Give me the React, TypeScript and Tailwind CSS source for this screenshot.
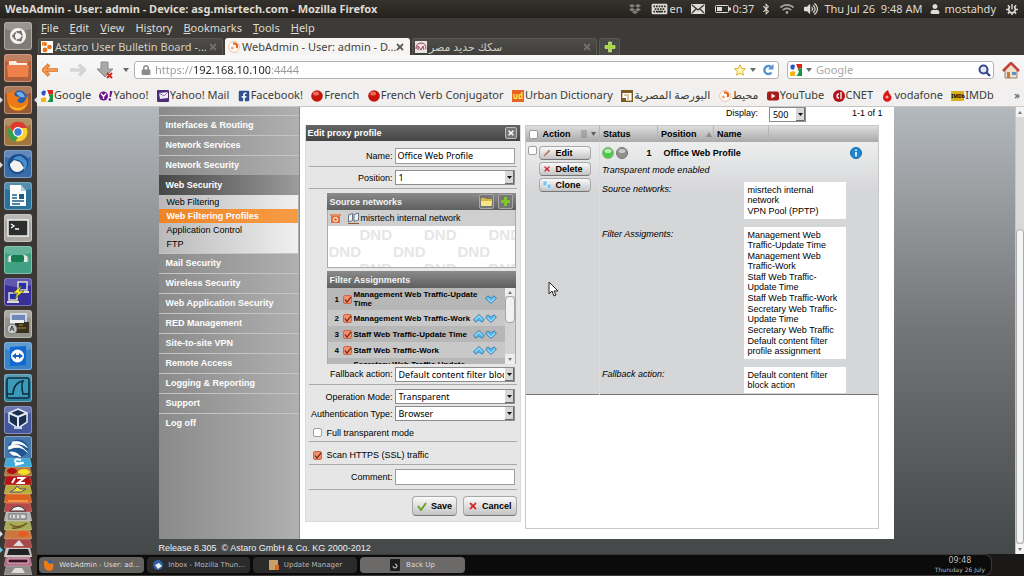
import { useState } from "react";
import type { ReactNode } from "react";
import {
  FaBluetoothB,
  FaDropbox,
  FaFacebookSquare,
  FaKeyboard,
  FaLock,
  FaTimes,
  FaUser,
  FaVolumeUp,
  FaWifi,
} from "react-icons/fa";

const UI_FONT = "font-['Noto_Sans','DejaVu_Sans',sans-serif]";
const PAGE_FONT = "font-['Liberation_Sans',Arial,sans-serif]";

const MENUS = [
  ["", "F", "ile"],
  ["", "E", "dit"],
  ["", "V", "iew"],
  ["Hi", "s", "tory"],
  ["", "B", "ookmarks"],
  ["", "T", "ools"],
  ["", "H", "elp"],
];

const NAV_TOP = ["Interfaces & Routing", "Network Services", "Network Security"];
const NAV_SUB = [
  "Web Filtering",
  "Web Filtering Profiles",
  "Application Control",
  "FTP",
];
const NAV_BOTTOM = [
  "Mail Security",
  "Wireless Security",
  "Web Application Security",
  "RED Management",
  "Site-to-site VPN",
  "Remote Access",
  "Logging & Reporting",
  "Support",
  "Log off",
];

const ASSIGNMENTS = [
  { name: "Management Web Traffic-Update Time", up: false },
  { name: "Management Web Traffic-Work", up: true },
  { name: "Staff Web Traffic-Update Time", up: true },
  { name: "Staff Web Traffic-Work", up: true },
  { name: "Secretary Web Traffic-Update Time", up: true },
];

const DETAILS = [
  {
    label: "Source networks:",
    values: ["misrtech internal network", "VPN Pool (PPTP)"],
  },
  {
    label: "Filter Assigments:",
    values: [
      "Management Web Traffic-Update Time",
      "Management Web Traffic-Work",
      "Staff Web Traffic-Update Time",
      "Staff Web Traffic-Work",
      "Secretary Web Traffic-Update Time",
      "Secretary Web Traffic",
      "Default content filter profile assignment",
    ],
  },
  { label: "Fallback action:", values: ["Default content filter block action"] },
];

/* ---------- small icons ---------- */

function GoogleIcon() {
  return (
    <svg viewBox="0 0 12 12" className="size-3 shrink-0">
      <rect width="12" height="12" fill="#fff" />
      <path d="M6 0h6v4L8 5z" fill="#d8261c" />
      <path d="M8 5l4-1v8H6l1-4z" fill="#159545" />
      <circle cx="3" cy="3" r="2.600" fill="#2b55c4" />
      <path d="M0 8l4-1 2 2-1 3H0z" fill="#f3b518" />
      <path d="M5 1l2 1-1 3 3 2-1 3-2 2-1-2 1-2-2-2z" fill="#fff" />
    </svg>
  );
}

function AstaroIcon() {
  return (
    <svg viewBox="0 0 12 12" className="size-3 shrink-0">
      <rect width="12" height="12" fill="#fff" />
      <circle cx="4" cy="3" r="2" fill="#e8731b" />
      <circle cx="8.500" cy="6" r="2.300" fill="#e8731b" />
      <circle cx="4" cy="9" r="2.400" fill="#e8731b" />
      <path d="M1 0l3 3-3 2z" fill="#f08b32" />
    </svg>
  );
}

function SwirlIcon() {
  return (
    <svg viewBox="0 0 12 12" className="size-3 shrink-0">
      <circle cx="6" cy="6" r="5.400" fill="#fff" stroke="#eeb48d" strokeWidth=".8" />
      <path d="M5 1.500c4-.5 6 2 5 5-1 1.500-2.500 1-2-.5.500-2-1-3-3-2z" fill="#e2641b" />
      <circle cx="4.300" cy="7" r="1.600" fill="#edab7d" />
    </svg>
  );
}

function YahooIcon() {
  return (
    <svg viewBox="0 0 14 12" className="h-3 w-3.5 shrink-0">
      <circle cx="4.500" cy="6" r="4.500" fill="#6b1387" />
      <path d="M2 3.500l2.500 3 2.500-3M4.500 6.500V9" fill="none" stroke="#fff" strokeWidth="1.400" />
      <path d="M11 1h2.500L12 7h-1.500z" fill="#6b1387" />
      <circle cx="10.800" cy="9.500" r="1.200" fill="#6b1387" />
    </svg>
  );
}

function RedBall() {
  return (
    <svg viewBox="0 0 12 12" className="size-3 shrink-0">
      <circle cx="6" cy="6" r="5.800" fill="#c3150c" />
      <ellipse cx="5" cy="3.600" rx="3" ry="2" fill="#ef6a5c" />
    </svg>
  );
}

function MailFavicon() {
  return (
    <svg viewBox="0 0 12 12" className="size-3 shrink-0">
      <rect width="12" height="12" rx="1" fill="#4c2c78" />
      <path d="M2 3l9-1v6l-8 1z" fill="#f1edf7" />
      <path d="M2 3l5 3 4-4" fill="none" stroke="#8d77ad" />
    </svg>
  );
}

function BourseIcon() {
  return (
    <svg viewBox="0 0 12 12" className="size-3 shrink-0">
      <rect x=".7" y=".7" width="10.600" height="10.600" fill="#fff" stroke="#7b5b20" strokeWidth="1.400" />
      <path d="M1 8h4v3H1zM1 1h10v2H1z" fill="#7b5b20" />
      <path d="M3 4h5v6H6V6H3z" fill="#d8c9a4" />
    </svg>
  );
}

function YouTubeIcon() {
  return (
    <svg viewBox="0 0 12 12" className="size-3 shrink-0">
      <rect y="1.500" width="12" height="9" rx="2" fill="#a41b17" />
      <path d="M4.500 3.500v5L8.500 6z" fill="#fff" />
    </svg>
  );
}

function CnetIcon() {
  return (
    <svg viewBox="0 0 12 12" className="size-3 shrink-0">
      <circle cx="6" cy="6" r="6" fill="#b3121d" />
      <path d="M6 4a2 2 0 1 0 0 4M8 2v7" fill="none" stroke="#fff" strokeWidth="1.300" />
    </svg>
  );
}

function VodafoneIcon() {
  return (
    <svg viewBox="0 0 12 12" className="size-3 shrink-0">
      <path d="M7 0C4 2 2 4 2 7.500a4 4 0 0 0 8.500 0C10 5 8 4 7 0z" fill="#dc1414" />
      <circle cx="6" cy="7" r="1.600" fill="#f5a8a2" />
    </svg>
  );
}

function Chevron({ up }: { up?: boolean }) {
  return (
    <svg viewBox="0 0 12 9" className={up ? "h-[9px] w-3" : "h-[9px] w-3 rotate-180"}>
      <path
        d="M6 .6l5.400 5-2.200 2.600L6 5.800 2.800 8.200.6 5.600z"
        fill="#5dbcec"
        stroke="#2577ad"
        strokeWidth=".8"
      />
      <path d="M2 5.500L6 2l3.500 3.200" fill="none" stroke="#c4ebfb" strokeWidth=".9" />
    </svg>
  );
}

function Caret() {
  return (
    <svg viewBox="0 0 6 4" className="h-1 w-1.5 shrink-0">
      <path d="M0 0h6L3 4z" fill="#6b6b6b" />
    </svg>
  );
}

/* ---------- desktop ---------- */

function TopPanel() {
  return (
    <header className="flex h-[18px] shrink-0 items-center justify-between bg-linear-to-b from-[#35312d] to-[#26231f] pr-1.5 pl-[5px] text-[11px] text-[#dfdbd2]">
      <h1 className="font-bold whitespace-nowrap">
        WebAdmin - User: admin - Device: asg.misrtech.com - Mozilla Firefox
      </h1>
      <div className="flex items-center whitespace-nowrap">
        <FaDropbox className="size-3 text-[#85807a]" />
        <FaKeyboard className="ml-2.5 h-3.5 w-[17px]" />
        <span className="ml-0.5">en</span>
        <svg viewBox="0 0 14 10" className="ml-2 h-2.5 w-3.5">
          <rect width="14" height="10" rx="1" fill="#dfdbd2" />
          <path d="M1 1l6 5 6-5M1 9l4-4M13 9L9 5" fill="none" stroke="#36322e" strokeWidth="1.200" />
        </svg>
        <svg viewBox="0 0 16 10" className="ml-2.5 h-2.5 w-4">
          <rect x=".5" y="1.500" width="13" height="7" rx="1" fill="none" stroke="#dfdbd2" />
          <rect x="2" y="3" width="5" height="4" fill="#dfdbd2" />
          <path d="M14 3.500h2v3h-2z" fill="#dfdbd2" />
        </svg>
        <span className="ml-0.5">0:37</span>
        <FaBluetoothB className="ml-1.5 size-3" />
        <FaWifi className="ml-2 size-3.5 text-[#a9a49c]" />
        <FaVolumeUp className="ml-2.5 size-3.5" />
        <time className="ml-1.5">Thu Jul 26&nbsp; 9:48 AM</time>
        <FaUser className="ml-2 size-2.5" />
        <span className="ml-1">mostahdy</span>
        {/* session menu */}
        <svg viewBox="0 0 13 13" className="ml-2.5 size-3">
          <circle cx="6.500" cy="7" r="3.600" fill="none" stroke="#dfdbd2" strokeWidth="1.800" />
          <path d="M2 2.500l2 2M11 2.500l-2 2M0 7h3M10 7h3M2 11.500l2-2M11 11.500l-2-2M6.500 10v3" stroke="#dfdbd2" strokeWidth="1.600" />
          <path d="M6.500 1v6" stroke="#2b2824" strokeWidth="4" />
          <path d="M6.500 1v6" stroke="#dfdbd2" strokeWidth="1.500" />
        </svg>
      </div>
    </header>
  );
}

function Tile({ bg, label, children }: { bg: string; label: string; children: ReactNode }) {
  return (
    <button
      aria-label={label}
      className={`size-7 shrink-0 rounded-[3px] border border-white/35 ${bg}`}
    >
      <svg viewBox="0 0 26 26" className="size-full">
        <path d="M0 0h26v6Q13 10 0 6z" fill="#fff" opacity=".2" />
        {children}
      </svg>
    </button>
  );
}

const STACK = [
  { fill: "#3fa9da", art: <path d="M17 2q-6-2-6 1t6 2-6 2" fill="none" stroke="#fff" strokeWidth="2" /> },
  { fill: "#b5773f", art: <g><ellipse cx="8" cy="4" rx="5" ry="3" fill="#b01313" /><ellipse cx="20" cy="5" rx="6" ry="3" fill="#f4df22" /></g> },
  { fill: "#b51414", art: <path d="M8 7l3-5M13 2h7l-6 5h7" fill="none" stroke="#fff" strokeWidth="2" /> },
  { fill: "#b9ac3f", art: <path d="M6 7l5-3 2-3 3 3 6 0-5 3z" fill="#f2e32f" stroke="#5c4a8e" /> },
  { fill: "#dd6222", art: <path d="M4 7h20" stroke="#f09447" strokeWidth="2" /> },
  { fill: "#b64a4a", art: <path d="M6 8q8-10 16 0z" fill="#eee" stroke="#333" /> },
  { fill: "#b4b4b4", art: <g><rect x="5" y="2" width="17" height="5" fill="#ddd" stroke="#666" /><path d="M8 3v3M12 3v3M16 3v3" stroke="#555" /></g> },
  { fill: "#a8ab55", art: <path d="M6 3q8 6 17-1M8 7q8 1 13-4" fill="none" stroke="#6b5a22" strokeWidth="1.500" /> },
  { fill: "#c9793f", art: <ellipse cx="19" cy="4" rx="5" ry="3" fill="#e65c20" /> },
  { fill: "#a94848", art: <path d="M9 7h11l-5-6z" fill="#ddd" /> },
  { fill: "#c9c5c0", art: <path d="M5 1h19l2 6H3z" fill="#222" /> },
  { fill: "#b06d86", art: <path d="M4 2h20v4H4z" fill="#3d1225" stroke="#e9b4cb" /> },
  { fill: "#8d8a88", art: <path d="M7 7l4-5h7l3 5z" fill="#ddd" /> },
];

function Launcher() {
  return (
    <nav
      aria-label="Launcher"
      className="relative flex w-[37px] shrink-0 flex-col gap-1 overflow-hidden bg-[#3b3632] pt-1 pl-1"
    >
      <Tile bg="bg-[#817b76]" label="Dash">
        <circle cx="13" cy="13" r="8" fill="#f4f2f0" />
        <circle cx="13" cy="13" r="4" fill="none" stroke="#77716c" strokeWidth="1.800" />
        <path d="M13 13L10 7M13 13h7M13 13l-3 6" stroke="#f4f2f0" />
        <circle cx="8.500" cy="13" r="1.500" fill="#77716c" />
        <circle cx="15.300" cy="9" r="1.500" fill="#77716c" />
        <circle cx="15.300" cy="17" r="1.500" fill="#77716c" />
      </Tile>
      <Tile bg="bg-[#b0603c]" label="Home Folder">
        <path d="M3 5h8l1 2h11v14H3z" fill="#e06c35" />
        <path d="M4 6h7l1 2h10v3H4z" fill="#f5efe8" />
        <path d="M2 10h22l-1 12H3z" fill="#ee8149" />
      </Tile>
      <Tile bg="bg-[#995a36]" label="Firefox">
        <circle cx="14" cy="12" r="8.500" fill="#2a5fae" />
        <path d="M11 6q6-3 9 4-5 1-6-1z" fill="#6db2e8" />
        <path d="M2 5c1 1 2 1 3 1 3-3 5-3 7-2-3 1-3 3-2 5 2 1 4 0 5 2-2 1-3 2-2 4 4 3 8 0 9-7 4 8-1 16-9 16C5 24 1 17 2 5z" fill="#ee7a16" />
        <path d="M4 17c4 5 12 6 18 0-4 8-15 8-18 0z" fill="#f9c22c" />
      </Tile>
      <Tile bg="bg-[#a1753e]" label="Chrome">
        <circle cx="13" cy="13" r="9.500" fill="#fbd12e" />
        <path d="M4.500 8A9.500 9.500 0 0 1 22 9H13l-4 5z" fill="#dd3b30" />
        <path d="M4.500 8l5 8 4 1-3 5.500A9.500 9.500 0 0 1 4.500 8z" fill="#34a04b" />
        <circle cx="13" cy="13" r="4.300" fill="#3b7bd4" stroke="#fff" strokeWidth="1.300" />
      </Tile>
      <Tile bg="bg-[#3a6ca8]" label="Thunderbird">
        <path d="M3 12C4 2 18 0 23 8c2 7-4 15-11 15C6 23 3 18 3 12z" fill="#1c4d8e" />
        <path d="M5 13l4-4 6 2 4 6q-3 4-7 4c-4 0-7-4-7-8z" fill="#f3f2ec" />
        <path d="M8 8q7-7 14 3 0 6-3 9 1-8-5-11z" fill="#4a90cf" />
      </Tile>
      <Tile bg="bg-[#2b7199]" label="Writer">
        <path d="M5 2h11l5 6v15H5z" fill="#fff" />
        <path d="M16 2v6h5z" fill="#a9cfe0" />
        <path d="M7 12h5M7 15h5M7 18h12M7 21h8" stroke="#1b5e86" strokeWidth="1.600" />
        <path d="M14 11h5v5h-5z" fill="#1b5e86" />
      </Tile>
      <Tile bg="bg-[#a9a6a2]" label="Terminal">
        <rect x="3" y="5" width="20" height="16" fill="#2c2e2e" stroke="#efefef" strokeWidth="1.500" />
        <path d="M6 9l3 2-3 2M10 14h4" fill="none" stroke="#fff" strokeWidth="1.300" />
      </Tile>
      <Tile bg="bg-[#3fa182]" label="Remote Desktop">
        <path d="M3 10q3-3 7-2h6q4-1 7 2v5H3z" fill="#dfe5e2" />
        <rect x="6" y="8" width="13" height="7" rx="1.500" fill="#157d4f" />
        <path d="M3 10v5M23 10v5" stroke="#8fa79d" />
      </Tile>
      <Tile bg="bg-[#392f98]" label="PuTTY">
        <path d="M13 3h9v8h-9zM4 14h8v7H4z" fill="#2431b4" stroke="#dcdccd" strokeWidth="1.500" />
        <path d="M12 12h12v2H12zM2 22h12v2H2z" fill="#dcdccd" />
        <path d="M17 6l-9 8h5l-4 6 10-8h-5z" fill="#f4ee34" stroke="#3c3900" strokeWidth=".6" />
      </Tile>
      <Tile bg="bg-[#94968c]" label="Backup">
        <rect x="6" y="3" width="15" height="9" fill="#7088b8" stroke="#e6e8ee" strokeWidth="1.500" />
        <rect x="10" y="11" width="14" height="11" fill="#363120" />
        <path d="M14 14h4M13 17h8" stroke="#a38a34" />
        <rect x="5" y="9" width="14" height="3" fill="#f0f0f0" />
        <circle cx="7" cy="18" r="5" fill="#c8c8c8" stroke="#777" />
        <path d="M5 20l2-5 2 5M5.500 18h3" stroke="#444" fill="none" />
      </Tile>
      <Tile bg="bg-[#3a83c4]" label="TeamViewer">
        <path d="M5 4l16-1v19l-16 1z" fill="#1168d3" />
        <circle cx="12.500" cy="13" r="6.500" fill="#fff" />
        <path d="M7 13l4-3v2h3v-2l4 3-4 3v-2h-3v2z" fill="#1464c0" />
      </Tile>
      <Tile bg="bg-[#2c809f]" label="Wireshark">
        <rect x="2" y="3" width="22" height="20" rx="2" fill="#3a9ab8" stroke="#0e2b3c" strokeWidth="1.500" />
        <path d="M2 19h6C8 12 12 7 18 6c-2 4-1 9 0 13h6" fill="none" stroke="#0e2b3c" strokeWidth="1.500" />
      </Tile>
      <Tile bg="bg-[#43569e]" label="VirtualBox">
        <path d="M13 2l9 4v9l-9 6-9-6V6z" fill="#1b2f50" stroke="#e5ebf5" strokeWidth="1.500" />
        <path d="M4 6l9 4 9-4M13 10v10" fill="none" stroke="#e5ebf5" strokeWidth="2" />
        <path d="M9 21h8" stroke="#c8d0e2" strokeWidth="2" />
      </Tile>
      <div className="-mt-0.5 flex flex-col">
        <button aria-label="Google Earth" className="h-[22px] w-7 rounded-t-[3px] border border-b-0 border-white/35 bg-[#4677ab]">
          <svg viewBox="0 0 28 22" className="size-full">
            <ellipse cx="14" cy="12" rx="11" ry="9.500" fill="#1f5592" />
            <path d="M4 10q10-6 20 6-8-9-20-3zM8 5q10-2 16 6-7-6-17-3zM5 16q7-1 12 5-5-2-9-2z" fill="#fff" stroke="#fff" />
          </svg>
        </button>
        {STACK.map(item => (
          <svg key={item.fill} viewBox="0 0 28 9" className="h-[9px] w-7 shrink-0">
            <path d="M2 0h24l2 9H0z" fill={item.fill} stroke="#ffffff55" strokeWidth=".7" />
            {item.art}
          </svg>
        ))}
      </div>
      {/* running markers */}
      <svg viewBox="0 0 37 560" className="pointer-events-none absolute top-0 left-0 h-[560px] w-[37px]">
        <path d="M0 79l3 3-3 3zM37 79l-3 3 3 3zM0 144l3 3-3 3zM0 513l3 3-3 3z" fill="#ddd" />
        <path d="M0 529l3 3-3 3z" fill="#6cc9e6" />
      </svg>
    </nav>
  );
}

function TaskBar() {
  return (
    <footer className="flex h-[22px] shrink-0 items-center bg-[#1b1918] font-['DejaVu_Sans',sans-serif] text-[7px] text-[#b9b9b9]">
      <div className="flex h-full flex-1 items-center gap-[3px] rounded-r-lg border-y border-r border-[#3b3a39] bg-[#0c0b0b] pl-0.5">
        <button className="flex h-4 w-[105px] items-center justify-center gap-1 rounded-[4px] bg-[#63625f] text-[#dedede]">
          <svg viewBox="0 0 12 12" className="size-3">
            <circle cx="6.500" cy="5.500" r="4" fill="#2f62b0" />
            <path d="M1 2q3-1 4 1 1 3 5 1 2 7-4 8-6-1-5-10z" fill="#ee7b1a" />
          </svg>
          WebAdmin - User: ad...
        </button>
        <button className="flex h-4 w-[103px] items-center justify-center gap-1 rounded-[4px] bg-[#2c2b2b]">
          <svg viewBox="0 0 12 12" className="size-3">
            <circle cx="6" cy="6" r="5" fill="#2c609f" />
            <path d="M3 6l4-2 3 3-4 3z" fill="#eee" />
          </svg>
          Inbox - Mozilla Thun...
        </button>
        <button className="flex h-4 w-[104px] items-center justify-center gap-1 rounded-[4px] bg-[#2c2b2b]">
          <svg viewBox="0 0 12 12" className="size-3">
            <path d="M1 1h9v10H1z" fill="#c89f69" />
            <path d="M7 6h4v5H7z" fill="#d8692a" />
          </svg>
          Update Manager
        </button>
        <button className="flex h-4 w-[105px] items-center justify-center gap-1.5 rounded-[4px] bg-[#6b6a69] text-[#dedede]">
          <svg viewBox="0 0 10 12" className="h-3 w-2.5">
            <rect width="10" height="12" rx="1" fill="#1c1c1c" />
            <path d="M3 7a2 2 0 1 0 2-2" fill="none" stroke="#ddd" />
          </svg>
          Back Up
        </button>
        <time className="mr-1.5 ml-auto flex flex-col items-center leading-[9px]">
          <span className="text-[8px]">09:48</span>
          <span className="text-[6px]">Thursday 26 July</span>
        </time>
      </div>
      <div className="w-8" />
    </footer>
  );
}

/* ---------- browser chrome ---------- */

function BrowserTab({
  title,
  icon,
  active,
  onSelect,
}: {
  title: string;
  icon: ReactNode;
  active: boolean;
  onSelect: () => void;
}) {
  return (
    <div
      className={`flex h-[17px] w-[185px] items-center rounded-t-[3px] border border-b-0 pr-1 pl-0.5 ${
        active
          ? "border-[#f6f5f4] bg-[#f6f5f4] text-[#45433f]"
          : "border-[#5a5853] bg-linear-to-b from-[#4d4c48] to-[#403f3b] text-[#d3cfc6]"
      }`}
    >
      <button
        onClick={onSelect}
        className="flex min-w-0 flex-1 items-center gap-0.5 text-[11px] leading-4 whitespace-nowrap"
      >
        {icon}
        {title}
      </button>
      <button aria-label="Close tab">
        <FaTimes className={active ? "size-2.5 text-[#555]" : "size-2.5 text-[#77746f]"} />
      </button>
    </div>
  );
}

function BrowserChrome() {
  const [tab, setTab] = useState(1);
  const [url, setUrl] = useState("https://192.168.10.100:4444");

  return (
    <div className="shrink-0 bg-[#3d3b37]">
      <div className="flex h-5 items-center gap-[11px] pl-1 text-[11px] text-[#dfdbd2]">
        {MENUS.map(([before, key, after]) => (
          <button key={key + after}>
            {before}
            <u>{key}</u>
            {after}
          </button>
        ))}
      </div>

      <div className="flex h-[17px] items-end gap-0.5 pl-px">
        <BrowserTab title="Astaro User Bulletin Board -..." icon={<AstaroIcon />} active={tab === 0} onSelect={() => setTab(0)} />
        <BrowserTab title="WebAdmin - User: admin - D..." icon={<SwirlIcon />} active={tab === 1} onSelect={() => setTab(1)} />
        <BrowserTab
          title="سكك حديد مصر"
          icon={
            <svg viewBox="0 0 12 12" className="size-3 shrink-0">
              <rect width="12" height="12" fill="#e8e4e4" />
              <path d="M1 8q0-6 5-6t5 6M3 9V5l3 4 2-4 1 4" fill="none" stroke="#a33f4c" />
            </svg>
          }
          active={tab === 2}
          onSelect={() => setTab(2)}
        />
        <button aria-label="New tab" className="flex h-[17px] w-[21px] items-center justify-center rounded-t-[3px] border border-b-0 border-[#5a5853] bg-[#4a4945]">
          <svg viewBox="0 0 12 12" className="size-3">
            <path d="M4.500 1h3v3.500H11v3H7.500V11h-3V7.500H1v-3h3.500z" fill="#a5dc3c" stroke="#d9f2a0" strokeWidth=".6" />
          </svg>
        </button>
      </div>

      <div className="flex h-[30px] items-center bg-linear-to-b from-[#f9f8f8] to-[#f1f0ef] pr-1 pl-[5px]">
        <button aria-label="Back">
          <svg viewBox="0 0 17 14" className="h-3.5 w-[17px]">
            <path d="M7 1.500L1.500 7 7 12.500M2 7h14" fill="none" stroke="#d66a1e" strokeWidth="3.600" strokeLinejoin="round" />
            <path d="M7 1.500L1.500 7 7 12.500M2 7h13.500" fill="none" stroke="#f39a52" strokeWidth="2" strokeLinejoin="round" />
          </svg>
        </button>
        <button aria-label="Forward" className="ml-2.5">
          <svg viewBox="0 0 17 14" className="h-3.5 w-[17px]">
            <path d="M10 1.500L15.500 7 10 12.500M15 7H1" fill="none" stroke="#d6d5d4" strokeWidth="3.400" strokeLinejoin="round" />
          </svg>
        </button>
        <button aria-label="Downloads" className="ml-2.5">
          <svg viewBox="0 0 18 18" className="size-[18px]">
            <path d="M5 1h7v7h5l-8 8-8-8h4z" fill="#a9a8a8" stroke="#8e8d8d" />
            <path d="M11 12l5 5M16 12l-5 5" stroke="#d8281e" strokeWidth="2" />
          </svg>
        </button>
        <button aria-label="History" className="ml-2 p-px">
          <Caret />
        </button>
        <div className="ml-1 flex h-[18px] flex-1 items-center rounded-[3px] border border-[#b3b1ad] bg-white pr-1 pl-1.5">
          <FaLock className="size-2.5 text-[#8a8a8a]" />
          <input
            aria-label="Address"
            value={url}
            onChange={e => setUrl(e.target.value)}
            className="ml-1 min-w-0 flex-1 bg-[linear-gradient(90deg,#999_39px,#222_39px,#222_115px,#999_115px)] bg-clip-text text-[11px] text-transparent outline-none"
          />
          <svg viewBox="0 0 12 12" className="size-3">
            <path d="M6 .8l1.600 3.600 3.900.4-2.900 2.600.8 3.800L6 9.300l-3.400 1.900.8-3.800L.5 4.800l3.900-.4z" fill="#fff6b0" stroke="#dcb233" />
          </svg>
          <span className="mx-1">
            <Caret />
          </span>
          <button aria-label="Reload" className="ml-0.5">
            <svg viewBox="0 0 12 12" className="size-3">
              <path d="M9.500 8.500A4 4 0 1 1 9 3" fill="none" stroke="#5b90cf" strokeWidth="2.400" />
              <path d="M11.500 0v5.500H6z" fill="#5b90cf" />
            </svg>
          </button>
        </div>
        <div className="ml-2 flex h-[18px] w-[207px] items-center rounded-[3px] border border-[#b3b1ad] bg-white px-0.5">
          <GoogleIcon />
          <span className="mx-1">
            <Caret />
          </span>
          <input
            aria-label="Search"
            placeholder="Google"
            className="min-w-0 flex-1 text-[11px] outline-none placeholder:text-[#a9a9a9]"
          />
          <button aria-label="Search Google">
            <svg viewBox="0 0 13 13" className="size-[13px]">
              <circle cx="5.500" cy="5.500" r="4" fill="#e4e9f6" stroke="#37478f" strokeWidth="2" />
              <path d="M8.500 8.500l3.500 3.500" stroke="#37478f" strokeWidth="2.400" />
            </svg>
          </button>
        </div>
        <button aria-label="Home" className="ml-2">
          <svg viewBox="0 0 18 17" className="h-[17px] w-[18px]">
            <path d="M3 8l6-6 6 6v8H3z" fill="#f0dfc8" stroke="#8f8072" />
            <path d="M1 9l8-8 8 8" fill="none" stroke="#c4403a" strokeWidth="2.600" />
            <path d="M5 10h3v6H5z" fill="#c87b35" />
            <path d="M10 10h4v3h-4z" fill="#5b90cf" />
          </svg>
        </button>
      </div>

      <nav aria-label="Bookmarks" className="flex h-[22px] items-center justify-between border-b border-[#c9c7c4] bg-[#f1f0ef] pr-1 pl-1 text-[11px] whitespace-nowrap text-[#3c3b37]">
        <a href="#google" className="flex items-center gap-px"><GoogleIcon />Google</a>
        <a href="#yahoo" className="flex items-center"><YahooIcon />Yahoo!</a>
        <a href="#ymail" className="flex items-center gap-px"><MailFavicon />Yahoo! Mail</a>
        <a href="#facebook" className="flex items-center gap-px"><FaFacebookSquare className="size-3 text-[#30508f]" />Facebook!</a>
        <a href="#french" className="flex items-center gap-px"><RedBall />French</a>
        <a href="#verbs" className="flex items-center gap-px"><RedBall />French Verb Conjugator</a>
        <a href="#urban" className="flex items-center gap-px">
          <span className="size-3 bg-[#e86222] text-center text-[8px] leading-3 font-bold text-[#ffe94d]">ud</span>Urban Dictionary
        </a>
        <a href="#bourse" className="flex items-center gap-px"><BourseIcon />البورصة المصرية</a>
        <a href="#moheet" className="flex items-center gap-px"><SwirlIcon />محيط</a>
        <a href="#youtube" className="flex items-center gap-px"><YouTubeIcon />YouTube</a>
        <a href="#cnet" className="flex items-center gap-px"><CnetIcon />CNET</a>
        <a href="#vodafone" className="flex items-center gap-px"><VodafoneIcon />vodafone</a>
        <a href="#imdb" className="flex items-center gap-px">
          <span className="h-2.5 w-[13px] bg-[#d6b31c] text-center text-[5px] leading-[10px] font-bold text-black">IMDb</span>IMDb
        </a>
        <button aria-label="More bookmarks" className="ml-3">»</button>
      </nav>
    </div>
  );
}

/* ---------- WebAdmin page ---------- */

function SideNav() {
  const item =
    "block h-5 border-t border-[#c4c4c4] pl-[7px] leading-[19px] font-bold text-white";
  return (
    <nav
      aria-label="WebAdmin"
      className="w-[141px] shrink-0 border-r border-[#888] bg-linear-to-r from-[#8a8a8a] to-[#b0b0b0]"
    >
      <div className="h-2" />
      {NAV_TOP.map(name => (
        <a key={name} href="#nav" className={item}>
          {name}
        </a>
      ))}
      <a href="#web-security" className="block h-5 bg-linear-to-r from-[#474747] to-[#9c9c9c] pl-[7px] leading-5 font-bold text-white">
        Web Security
      </a>
      <div className="mr-px bg-linear-to-r from-[#b9b9b9] to-[#f0f0f0] pb-0.5">
        {NAV_SUB.map(name => (
          <a
            key={name}
            href="#sub"
            className={`block h-3.5 pl-2 leading-[14px] ${
              name === "Web Filtering Profiles"
                ? "bg-linear-to-r from-[#ee8424] to-[#f79c45] font-bold text-white"
                : "text-black"
            }`}
          >
            {name}
          </a>
        ))}
      </div>
      {NAV_BOTTOM.map(name => (
        <a key={name} href="#nav" className={item}>
          {name}
        </a>
      ))}
    </nav>
  );
}

function SelectBox({
  id,
  options,
  label,
}: {
  id: string;
  options: string[];
  label?: string;
}) {
  return (
    <div className="relative min-w-0 flex-1">
      <select
        id={id}
        aria-label={label}
        className={`${UI_FONT} block h-[15px] w-full appearance-none border border-[#8c8c8c] bg-white pr-2.5 pl-[3px] text-[9px] leading-[13px]`}
      >
        {options.map(o => (
          <option key={o}>{o}</option>
        ))}
      </select>
      <svg viewBox="0 0 9 13" className="pointer-events-none absolute top-px right-px h-[13px] w-[9px]">
        <rect width="9" height="13" fill="#d8d8d8" />
        <path d="M8.500 0v12.500H0" fill="none" stroke="#6a6a6a" />
        <path d="M2 5h5L4.500 8z" fill="#111" />
      </svg>
    </div>
  );
}

function TickBox({ id, label, on = false }: { id?: string; label?: string; on?: boolean }) {
  const [checked, setChecked] = useState(on);
  return (
    <span className="relative size-[9px] shrink-0">
      <input
        id={id}
        type="checkbox"
        aria-label={label}
        checked={checked}
        onChange={e => setChecked(e.target.checked)}
        className="block size-[9px] appearance-none rounded-[2px] border border-[#9c9c9c] bg-white checked:border-[#c8694a] checked:bg-[#f48e6c]"
      />
      {checked && (
        <svg viewBox="0 0 9 9" className="pointer-events-none absolute inset-0 size-[9px]">
          <path d="M2 4.500l2 2.500 4-5" fill="none" stroke="#5e2210" strokeWidth="1.200" />
        </svg>
      )}
    </span>
  );
}

const BUTTON_LOOK =
  "flex items-center rounded-[4px] border border-[#a8a8a8] border-b-[#777] bg-linear-to-b from-[#fafafa] to-[#c4c4c4] font-bold";

function Field({ id, label, children }: { id: string; label: string; children: ReactNode }) {
  return (
    <>
      <label htmlFor={id} className="w-[84px] shrink-0 text-right whitespace-nowrap">
        {label}
      </label>
      <div className="flex min-w-0 flex-1 pr-0.5 pl-0.5">{children}</div>
    </>
  );
}

function ProfileForm() {
  const [name, setName] = useState("Office Web Profile");
  const row = "flex items-center border-b border-[#a9a9a9]";
  const sectionHead =
    "flex h-[17px] items-center justify-between bg-linear-to-b from-[#8b8b8b] to-[#5f5f5f] pl-[3px] font-bold text-[#f2f2f2]";

  return (
    <form
      onSubmit={e => e.preventDefault()}
      className="self-start border border-t-0 border-[#dadada] bg-[#e6e6e6]"
    >
      <div className="flex h-4 items-center justify-between bg-linear-to-b from-[#666] to-[#444] pr-[3px] pl-0.5 font-bold text-white">
        <h2>Edit proxy profile</h2>
        <button type="button" aria-label="Close" className="flex size-3 items-center justify-center rounded-[2px] border border-[#bbb] bg-[#777]">
          <FaTimes className="size-2" />
        </button>
      </div>

      <div className="px-[3px]">
        <div className={`${row} h-[26px] pt-1`}>
          <Field id="profile-name" label="Name:">
            <input
              id="profile-name"
              value={name}
              onChange={e => setName(e.target.value)}
              className={`${UI_FONT} h-4 w-full border border-[#9d9d9d] bg-white px-0.5 text-[9px]`}
            />
          </Field>
        </div>
        <div className={`${row} h-[22px]`}>
          <Field id="profile-position" label="Position:">
            <SelectBox id="profile-position" options={["1", "2"]} />
          </Field>
        </div>

        <section className="mt-1 mr-px ml-[18px]">
          <div className={sectionHead}>
            <h3>Source networks</h3>
            <div className="flex gap-1 pr-[3px]">
              <button type="button" aria-label="Browse networks" className="size-[15px] rounded-[2px] border border-[#a8a8a8] bg-[#777]">
                <svg viewBox="0 0 13 13" className="size-full">
                  <path d="M1 3h4l1 1h6v7H1z" fill="#d9b93c" />
                  <path d="M1 6h11l-1 5H1z" fill="#f6e487" />
                </svg>
              </button>
              <button type="button" aria-label="Add network" className="size-[15px] rounded-[2px] border border-[#a8a8a8] bg-[#777]">
                <svg viewBox="0 0 13 13" className="size-full">
                  <path d="M5 2h3v3h3v3H8v3H5V8H2V5h3z" fill="#7fc52c" />
                </svg>
              </button>
            </div>
          </div>
          <div className="flex h-4 items-center border-x border-[#aaa] bg-[#cfcfcf] pl-0.5">
            <button type="button" aria-label="Remove misrtech internal network">
              <svg viewBox="0 0 11 11" className="size-[11px]">
                <path d="M1 2h9v8H1z" fill="#e8713a" />
                <path d="M0 1h11v2H0z" fill="#d89067" />
                <circle cx="5.500" cy="6.500" r="2" fill="none" stroke="#fff" />
              </svg>
            </button>
            <svg viewBox="0 0 13 13" className="ml-1.5 size-[13px]">
              <path d="M1.500 3l4-1.500v7l-4 1.500zM7 2.500L11.500 1v7L7 9.500z" fill="#eef1f5" stroke="#4a5668" strokeWidth=".8" />
              <path d="M1 11.500h11" stroke="#8a5a2c" />
            </svg>
            <span className="ml-px">misrtech internal network</span>
          </div>
          {/* drop area */}
          <div
            aria-hidden="true"
            className="h-[42px] overflow-hidden border border-t-0 border-[#aaa] bg-white text-[15px] leading-[17px] font-bold whitespace-nowrap text-[#e6e6e6]"
          >
            <div className="flex gap-8 pl-8"><span>DND</span><span>DND</span><span>DND</span></div>
            <div className="flex gap-8 pl-px"><span>DND</span><span>DND</span><span>DND</span></div>
            <div className="flex gap-8 pl-8"><span>DND</span><span>DND</span><span>DND</span></div>
          </div>
        </section>

        <section className="mt-[3px] mr-px ml-[18px]">
          <h3 className={sectionHead}>Filter Assignments</h3>
          <div className="flex h-[76px] border-x border-[#aaa]">
            <ol className="min-w-0 flex-1 overflow-hidden text-[8px] leading-[9px] font-bold">
              {ASSIGNMENTS.map((a, i) => (
                <li
                  key={a.name}
                  className="flex min-h-4 items-center py-0.5 pr-2 pl-[7px] odd:bg-[#b7b7b7] even:bg-[#c8c8c8]"
                >
                  <span className="mr-0.5 w-1.5">{i + 1}</span>
                  <TickBox label={a.name} on />
                  <span className="ml-0.5 flex-1">{a.name}</span>
                  {a.up && <Chevron up />}
                  <Chevron />
                </li>
              ))}
            </ol>
            <div className="flex w-2.5 flex-col items-center bg-[#d2d2d2]">
              <div className="flex h-2 w-full items-center justify-center bg-[#eee]">
                <svg viewBox="0 0 4 3" className="h-[3px] w-1"><path d="M0 3h4L2 0z" fill="#777" /></svg>
              </div>
              <div className="h-[27px] w-full rounded-[4px] border border-[#a5a5a5] bg-[#f2f2f2]" />
              <div className="mt-auto flex h-2.5 w-full items-center justify-center bg-[#eee]">
                <svg viewBox="0 0 4 3" className="h-[3px] w-1"><path d="M0 0h4L2 3z" fill="#777" /></svg>
              </div>
            </div>
          </div>
        </section>

        <div className={`${row} h-[21px]`}>
          <Field id="fallback" label="Fallback action:">
            <SelectBox id="fallback" options={["Default content filter block action"]} />
          </Field>
        </div>
        <div className="flex h-5 items-center pt-[3px]">
          <Field id="mode" label="Operation Mode:">
            <SelectBox id="mode" options={["Transparent", "Standard"]} />
          </Field>
        </div>
        <div className="flex h-[17px] items-center">
          <Field id="auth" label="Authentication Type:">
            <SelectBox id="auth" options={["Browser", "None"]} />
          </Field>
        </div>
        <div className={`${row} h-5 gap-[5px] pt-0.5 pl-1`}>
          <TickBox id="full" />
          <label htmlFor="full">Full transparent mode</label>
        </div>
        <div className={`${row} h-[23px] gap-[5px] pt-1 pl-1`}>
          <TickBox id="scan" on />
          <label htmlFor="scan">Scan HTTPS (SSL) traffic</label>
        </div>
        <div className={`${row} h-[25px]`}>
          <Field id="comment" label="Comment:">
            <input id="comment" className="h-4 w-full border border-[#9d9d9d] bg-white px-0.5 text-[9px]" />
          </Field>
        </div>
        <div className="flex h-[31px] items-center justify-end gap-1.5">
          <button type="submit" className={`${BUTTON_LOOK} h-5 gap-1 px-1`}>
            <svg viewBox="0 0 10 10" className="size-2.5">
              <path d="M1 5l3 4 5-7" fill="none" stroke="#6aa52b" strokeWidth="2" />
            </svg>
            Save
          </button>
          <button type="button" className={`${BUTTON_LOOK} h-5 gap-1 px-1`}>
            <FaTimes className="size-2.5 text-[#d02a22]" />
            Cancel
          </button>
        </div>
      </div>
    </form>
  );
}

function ProfileTable() {
  const head = "border-r border-[#b5b5b5] pl-[3px] text-left font-bold";
  const action = `${BUTTON_LOOK} h-[14px] w-[52px] gap-[5px] pl-[3px]`;

  return (
    <div className="mr-1 flex-1 border border-[#c8c8c8] bg-white">
      <table className="w-full table-fixed border-collapse">
        <colgroup>
          <col className="w-[74px]" />
          <col className="w-[58px]" />
          <col className="w-[56px]" />
          <col className="w-[55px]" />
          <col />
        </colgroup>
        <thead>
          <tr className="h-4 bg-linear-to-b from-[#dedede] to-[#a9a9a9]">
            <th className={head}>
              <div className="flex items-center">
                <TickBox label="Select all" />
                <span className="ml-[5px]">Action</span>
                <svg viewBox="0 0 16 8" className="mr-0.5 ml-auto h-2 w-4">
                  <path d="M0 1h6M0 3h6M0 5h6M0 7h6" stroke="#858585" />
                  <path d="M10 2h5l-2.500 4z" fill="#5d5d5d" />
                </svg>
              </div>
            </th>
            <th className={head}>Status</th>
            <th className={head}>
              <div className="flex items-center justify-between">
                Position
                <svg viewBox="0 0 6 5" className="mr-px h-[5px] w-1.5"><path d="M3 0l3 5H0z" fill="#8d8d8d" /></svg>
              </div>
            </th>
            <th className={head}>Name</th>
            <th aria-label="Info" />
          </tr>
        </thead>
        <tbody className="border-b border-[#777] bg-linear-to-b from-[#eeeeee] from-0% to-[#d5d6d8] to-20%">
          <tr className="h-[21px]">
            <td rowSpan={2} className="border-r border-[#dcdcdc] align-top">
              <div className="flex gap-0.5 pt-1 pl-0.5">
                <TickBox label="Select Office Web Profile" />
                <div className="flex flex-col gap-0.5">
                  <button className={action}>
                    <svg viewBox="0 0 8 8" className="size-2"><path d="M1 7l1-2 4-4 1 1-4 4z" fill="#cf8a72" stroke="#a0614d" strokeWidth=".5" /></svg>
                    Edit
                  </button>
                  <button className={action}>
                    <FaTimes className="size-2 text-[#cf2c35]" />
                    Delete
                  </button>
                  <button className={action}>
                    <svg viewBox="0 0 8 8" className="size-2"><path d="M0 0h4v5H0zM4 3h4v5H4z" fill="#7cc3ec" stroke="#fff" strokeWidth=".6" /></svg>
                    Clone
                  </button>
                </div>
              </div>
            </td>
            <td>
              <div className="flex items-center gap-0.5 pt-px pr-1.5 pl-0.5">
                <svg viewBox="0 0 12 12" className="size-3">
                  <circle cx="6" cy="6" r="5.500" fill="#4fc94a" stroke="#8fb08d" />
                  <ellipse cx="6" cy="4" rx="3.500" ry="2" fill="#b9f0b4" />
                </svg>
                <svg viewBox="0 0 12 12" className="size-3">
                  <circle cx="6" cy="6" r="5.500" fill="#8f8f8f" stroke="#777" />
                  <ellipse cx="6" cy="4" rx="3.500" ry="2" fill="#c9c9c9" />
                </svg>
                <span className="ml-auto font-bold">1</span>
              </div>
            </td>
            <td colSpan={3}>
              <div className="flex items-center justify-between pt-px pr-4 pl-1.5 font-bold">
                Office Web Profile
                <svg viewBox="0 0 12 12" role="img" aria-label="Info" className="size-3">
                  <circle cx="6" cy="6" r="5.500" fill="#1e87cf" stroke="#146aa8" />
                  <path d="M6 5v4.500M6 2.500v1.500" stroke="#fff" strokeWidth="1.600" />
                </svg>
              </div>
            </td>
          </tr>
          <tr>
            <td colSpan={4} className="pr-8 pb-px pl-0.5 align-top">
              <p className="pt-px italic">Transparent mode enabled</p>
              <dl className="mt-1.5 flex flex-col gap-2">
                {DETAILS.map(d => (
                  <div key={d.label} className="flex items-start justify-between">
                    <dt className="pt-px leading-3 italic">{d.label}</dt>
                    <dd className="flex w-[102px] flex-col gap-px bg-white py-[3px] pr-1 pl-1 leading-[10px]">
                      {d.values.map(v => (
                        <span key={v}>{v}</span>
                      ))}
                    </dd>
                  </div>
                ))}
              </dl>
            </td>
          </tr>
        </tbody>
      </table>
    </div>
  );
}

function PageScrollbar() {
  return (
    <div className="flex w-[9px] shrink-0 flex-col items-center border-l border-[#c5c5c5] bg-[#d8d8d8]">
      <div className="flex h-2.5 w-full items-center justify-center bg-[#f3f3f3]">
        <svg viewBox="0 0 4 3" className="h-[3px] w-1"><path d="M0 3h4L2 0z" fill="#777" /></svg>
      </div>
      <div className="h-1/4" />
      <div className="w-full flex-1 rounded-[4px] border border-[#aaa] bg-[#f4f4f4]" />
      <div className="flex h-2.5 w-full items-center justify-center bg-[#f3f3f3]">
        <svg viewBox="0 0 4 3" className="h-[3px] w-1"><path d="M0 0h4L2 3z" fill="#777" /></svg>
      </div>
    </div>
  );
}

function WebAdmin() {
  return (
    <div className={`${PAGE_FONT} flex min-h-0 flex-1 overflow-hidden text-[9px] leading-3 text-black`}>
      <div className="flex min-w-0 flex-1 flex-col bg-linear-to-b from-[#b4b9bd] via-[#737577] to-[#454849]">
        <div className="mx-auto flex w-full max-w-[735px] flex-1 flex-col">
          <div className="flex flex-1">
            <SideNav />
            <main className="grid flex-1 grid-cols-[216px_1fr] gap-1 bg-white pr-[11px] pb-2.5 pl-[5px]">
              <div className="pt-[18px]">
                <ProfileForm />
              </div>
              <div className="flex flex-col">
                <div className="flex h-[18px] items-start justify-end">
                  <label htmlFor="display" className="mr-[11px]">Display:</label>
                  <div className="mr-[46px] flex w-[37px]">
                    <SelectBox id="display" options={["500"]} />
                  </div>
                  <span>1-1 of 1</span>
                </div>
                <ProfileTable />
              </div>
            </main>
          </div>
          <footer className="h-[15px] pt-[3px] text-[#f0f0f0]">
            Release 8.305&nbsp; © Astaro GmbH &amp; Co. KG 2000-2012
          </footer>
        </div>
      </div>
      <PageScrollbar />
    </div>
  );
}

export default function App() {
  return (
    <div className={`${UI_FONT} relative flex h-screen w-full flex-col overflow-hidden bg-[#3b3632]`}>
      <TopPanel />
      <div className="flex min-h-0 flex-1">
        <Launcher />
        <div className="flex min-w-0 flex-1 flex-col">
          <BrowserChrome />
          <WebAdmin />
          <TaskBar />
        </div>
      </div>
      {/* mouse pointer */}
      <svg viewBox="0 0 10 16" className="pointer-events-none absolute top-[281px] left-[548px] h-4 w-2.5">
        <path d="M1 1v12l3-3 2 5 2-1-2-4h4z" fill="#fff" stroke="#222" />
      </svg>
    </div>
  );
}
